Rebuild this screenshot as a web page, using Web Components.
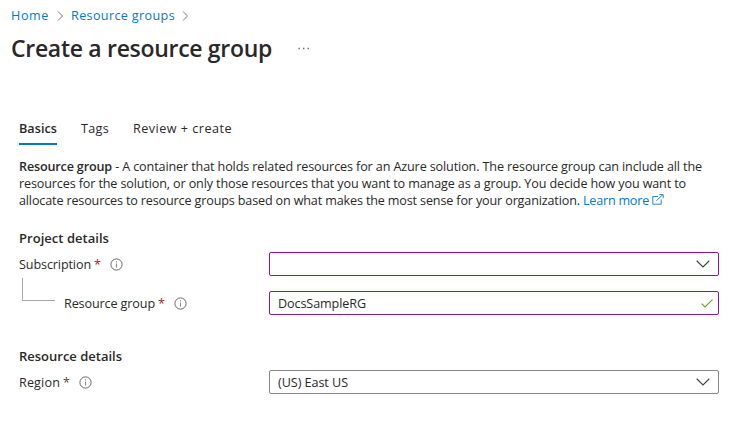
<!DOCTYPE html>
<html lang="en">
<head>
<meta charset="utf-8">
<title>Create a resource group</title>
<style>
html,body{margin:0;background:#fff}
body{font:12.6px/17px "Open Sans","Noto Sans",sans-serif;color:#292827;overflow:hidden}
</style>
</head>
<body>
<resource-page></resource-page>
<script>
const define=(name,html,setup)=>customElements.define(name,class extends HTMLElement{
  connectedCallback(){
    if(this.shadowRoot)return;
    const t=document.createElement('template');
    t.innerHTML=typeof html==='function'?html(this):html;
    this.attachShadow({mode:'open'}).append(t.content.cloneNode(true));
    if(setup)setup(this);
  }
});

/* A run of text tracked to occupy the width given by its "w" attribute. */
define('fit-text','<style>:host{display:inline-block;white-space:pre}</style><slot></slot>',el=>{
  const natural=el.getBoundingClientRect().width,n=[...el.textContent].length,w=+el.getAttribute('w');
  el.style.letterSpacing=((w-natural)/n).toFixed(4)+'px';
});

define('ui-icon',el=>{
  const icons={
    crumb:[7,12,'<path d="M1 1.5 5.5 6 1 10.5" stroke="#777"/>'],
    down:[14,8,'<path d="m.7.8 6.3 6.1L13.300.8" stroke="#444" stroke-width="1.2"/>'],
    check:[12,9,'<path d="m.6 4.600 3.400 3.300L11.500.6" stroke="#6da334" stroke-width="1.2"/>'],
    info:[13,13,'<circle cx="6.5" cy="6.500" r="5.600" stroke="#666"/><path d="M6.5 5.500v4M6.500 3.300v1.200" stroke="#888" stroke-width="1.1"/>'],
    more:[12,3,'<path d="M.5 1.500h1.400M5 1.500h1.400M9.500 1.500h1.400" stroke="#666" stroke-width="1.3"/>'],
    external:[12,11,'<path d="M6 2.500H.8v7.700h8.400V5.500M4.300 6.800 10.800.7M7.300.6h3.900v3.600" stroke="#2485d8"/>']
  };
  const [w,h,p]=icons[el.getAttribute('name')];
  return `<style>:host{display:block;flex:none}svg{display:block}</style><svg width="${w}" height="${h}" viewBox="0 0 ${w} ${h}" fill="none">${p}</svg>`;
});

define('bread-crumbs',`<style>:host{display:flex;align-items:center;height:18px;padding:6px 0 1px 11px;color:#0078d4}
.a{margin:1px 7px 0 8px}.b{margin:1px 0 0 7px}</style>
<fit-text w="38">Home</fit-text><ui-icon class="a" name="crumb"></ui-icon><fit-text w="104">Resource groups</fit-text><ui-icon class="b" name="crumb"></ui-icon>`);

define('page-title',`<style>:host{display:flex;align-items:center;height:32px;margin-top:7px;padding-left:11px}
h1{margin:0;font-size:23px;line-height:32px;font-weight:600}ui-icon{margin:1px 0 0 26px}</style>
<h1><fit-text w="261"><slot></slot>Create a resource group</fit-text></h1><ui-icon name="more"></ui-icon>`);

define('tab-item',el=>`<style>:host{display:block;height:26px;box-sizing:border-box;padding-top:1px}
:host([selected]){font-weight:600;border-bottom:2px solid #0078d4}</style><slot></slot>`);

define('tab-bar',`<style>:host{display:flex;gap:24px;margin:55px 0 0 19px;height:26px}</style>
<tab-item selected><fit-text w="38">Basics</fit-text></tab-item><tab-item><fit-text w="28">Tags</fit-text></tab-item><tab-item><fit-text w="99">Review + create</fit-text></tab-item>`);

define('intro-text',`<style>:host{display:block;margin:13px 0 0 19px}.l{display:flex;align-items:center;height:17px}
b{font-weight:600}.link{color:#0078d4}ui-icon{margin-left:3px;margin-top:-2px}</style>
<div class="l"><b><fit-text w="93">Resource group</fit-text></b><fit-text w="590"> - A container that holds related resources for an Azure solution. The resource group can include all the</fit-text></div>
<div class="l"><fit-text w="667">resources for the solution, or only those resources that you want to manage as a group. You decide how you want to</fit-text></div>
<div class="l"><fit-text w="564">allocate resources to resource groups based on what makes the most sense for your organization. </fit-text><span class="link"><fit-text w="66">Learn more</fit-text></span><ui-icon name="external"></ui-icon></div>`);

define('section-heading','<style>:host{display:block;height:17px;padding-left:19px;font-weight:600;font-size:13px}</style><slot></slot>');

define('form-row',`<style>:host{display:grid;grid-template-columns:250px 450px;margin-left:19px;height:24px;align-items:center}
.label{display:flex;align-items:center;position:relative}
.req{color:#a4262c;width:10px;margin-left:3px;line-height:17px}
ui-icon{margin:1px 0 0 6px}
:host([child]) .label{padding-left:45px}
:host([child]) .label::before{content:"";position:absolute;left:3px;top:-17px;width:32px;height:22px;border:solid #a6a6a6;border-width:0 0 1px 1px}
</style><div class="label"><slot name="label"></slot><span class="req">*</span><ui-icon name="info"></ui-icon></div><slot></slot>`);

define('field-box',el=>`<style>:host{display:flex;align-items:center;justify-content:space-between;box-sizing:border-box;width:450px;height:24px;border:1px solid #858585;border-radius:2px;padding:0 8px}
:host([changed]){border-color:#881798}:host([valid]){padding-right:5px}</style><span><slot></slot></span><ui-icon name="${el.hasAttribute('valid')?'check':'down'}"></ui-icon>`);

define('resource-page',`<style>:host{display:block;width:747px;height:431px}
.h1{margin-top:21px}.r1{margin-top:5px}.r2{margin-top:15px}.h2{margin-top:33px}</style>
<bread-crumbs></bread-crumbs><page-title></page-title><tab-bar></tab-bar><intro-text></intro-text>
<section-heading class="h1"><fit-text w="90">Project details</fit-text></section-heading>
<form-row class="r1"><fit-text slot="label" w="72">Subscription</fit-text><field-box changed></field-box></form-row>
<form-row class="r2" child><fit-text slot="label" w="91">Resource group</fit-text><field-box changed valid><fit-text w="88">DocsSampleRG</fit-text></field-box></form-row>
<section-heading class="h2"><fit-text w="103">Resource details</fit-text></section-heading>
<form-row class="r1"><fit-text slot="label" w="41">Region</fit-text><field-box><fit-text w="70">(US) East US</fit-text></field-box></form-row>`);
</script>
</body>
</html>
